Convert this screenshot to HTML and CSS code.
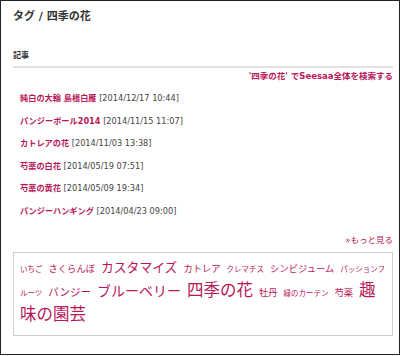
FILE: index.html
```html
<!DOCTYPE html>
<html lang="ja">
<head>
<meta charset="utf-8">
<link rel="stylesheet" href="styles.css">
</head>
<body>
<div class="frame">
  <h1 class="title">タグ / 四季の花</h1>
  <h2 class="sec">記事</h2>
  <div class="search"><a href="#">'四季の花' でSeesaa全体を検索する</a></div>
  <ul class="articles">
    <li><a href="#">純白の大輪 島根白雁</a> <span class="date">[2014/12/17 10:44]</span></li>
    <li><a href="#">パンジーボール2014</a> <span class="date">[2014/11/15 11:07]</span></li>
    <li><a href="#">カトレアの花</a> <span class="date">[2014/11/03 13:38]</span></li>
    <li><a href="#">芍薬の白花</a> <span class="date">[2014/05/19 07:51]</span></li>
    <li><a href="#">芍薬の黄花</a> <span class="date">[2014/05/09 19:34]</span></li>
    <li><a href="#">パンジーハンギング</a> <span class="date">[2014/04/23 09:00]</span></li>
  </ul>
  <div class="more"><a href="#">»もっと見る</a></div>
  <div class="cloud"><a href="#" class="s1">いちご</a><a href="#" class="s2">さくらんぼ</a><a href="#" class="s4">カスタマイズ</a><a href="#" class="s2">カトレア</a><a href="#" class="s1">クレマチス</a><a href="#" class="s2">シンビジューム</a><a href="#" class="s1"><span>パッションフ</span><span>ルーツ</span></a><a href="#" class="s3">パンジー</a><a href="#" class="s5">ブルーベリー</a><a href="#" class="s6">四季の花</a><a href="#" class="s2">牡丹</a><a href="#" class="s1">緑のカーテン</a><a href="#" class="s2">芍薬</a><a href="#" class="s6"><span>趣</span><span>味の園芸</span></a></div>
</div>
</body>
</html>
```
FILE: styles.css
```css
html, body {
  margin: 0;
  padding: 0;
  background: #fff;
}
body {
  font-family: "DejaVu Sans", "Noto Sans CJK JP", sans-serif;
  color: #333;
}
a {
  color: #b8175a;
  text-decoration: none;
}
.frame {
  box-sizing: border-box;
  width: 400px;
  height: 355px;
  border: 1px solid #222;
  padding: 9px 6px 0 12px;
}
.title {
  margin: 0;
  font-size: 11px;
  line-height: 14px;
  font-weight: bold;
  color: #333;
}
.sec {
  margin: 26px 0 0;
  padding-bottom: 4px;
  border-bottom: 2px solid #e2e2e2;
  font-size: 8px;
  line-height: 12px;
  font-weight: bold;
  color: #333;
}
.search {
  margin-top: 2px;
  text-align: right;
  font-size: 8.5px;
  line-height: 12px;
  font-weight: bold;
}
.articles {
  list-style: none;
  margin: 5px 0 0;
  padding: 0 0 0 7px;
}
.articles li {
  font-size: 8.2px;
  line-height: 22.6px;
}
.articles a {
  font-weight: bold;
}
.date {
  color: #444;
}
.more {
  margin-top: 11px;
  text-align: right;
  font-size: 8.5px;
  line-height: 12px;
}
.cloud {
  margin-top: 6px;
  border: 1px solid #cfcfcf;
  padding: 0 4px 10px 6px;
  font-family: "Noto Sans CJK JP", sans-serif;
  font-size: 16px;
  line-height: 24px;
}
.cloud a {
  line-height: 1;
  margin-right: 6px;
}
.s1 { font-size: 7.5px; }
.s2 { font-size: 9.3px; }
.s3 { font-size: 10.5px; }
.s4 { font-size: 12.8px; }
.s5 { font-size: 14px; }
.s6 { font-size: 16.5px; }
```
